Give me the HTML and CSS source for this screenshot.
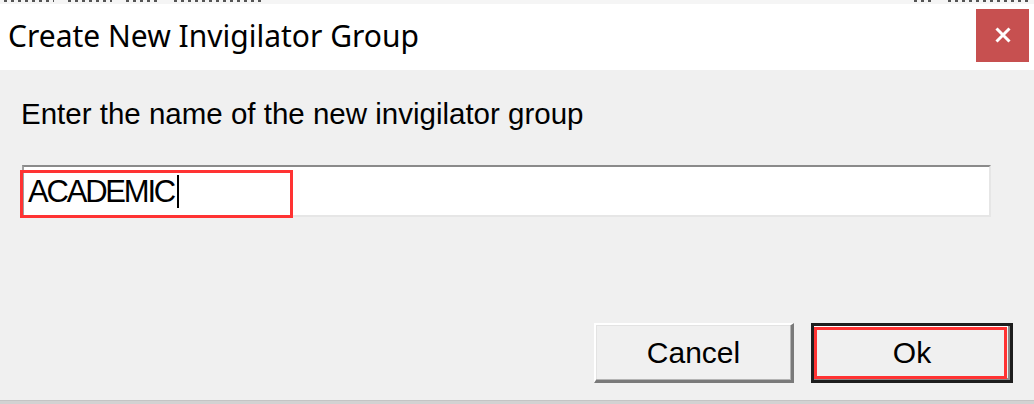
FILE: index.html
```html
<!DOCTYPE html>
<html>
<head>
<meta charset="utf-8">
<title>Create New Invigilator Group</title>
<link rel="stylesheet" href="styles.css">
</head>
<body>
<div class="dialog">
  <div class="under">
    <div class="frag-group">
      <i class="frag w50"></i><i class="frag w44"></i><i class="frag w34"></i><i class="frag w90"></i>
    </div>
    <div class="frag-group">
      <i class="frag w20"></i><i class="frag w80"></i>
    </div>
  </div>
  <div class="titlebar">
    <span class="title">Create New Invigilator Group</span>
    <button class="close" aria-label="Close">
      <svg width="16" height="16" viewBox="0 0 16 16"><path d="M1.5 1.5 L14.5 14.5 M14.5 1.5 L1.5 14.5" stroke="#fff" stroke-width="3" fill="none"/></svg>
    </button>
  </div>
  <div class="content">
    <div class="label">Enter the name of the new invigilator group</div>
    <div class="field">
      <span class="value">ACADEMIC</span><span class="caret"></span>
      <span class="mark mark-field"></span>
    </div>
    <div class="buttons">
      <button class="btn">Cancel</button>
      <button class="btn default">Ok<span class="mark mark-ok"></span></button>
    </div>
  </div>
  <div class="bottom-edge"></div>
</div>
</body>
</html>
```
FILE: styles.css
```css
html, body {
  margin: 0;
  padding: 0;
}
body {
  width: 1034px;
  height: 404px;
  overflow: hidden;
  background: #f0f0f0;
  font-family: "Liberation Sans", Arial, sans-serif;
}
.dialog {
  display: flex;
  flex-direction: column;
  height: 404px;
}
.under {
  height: 4px;
  overflow: hidden;
  background: #f5f5f5;
  display: flex;
  justify-content: space-between;
  padding: 0 6px 0 4px;
}
.frag-group {
  display: flex;
  gap: 14px;
}
.frag {
  display: block;
  height: 2px;
  background: repeating-linear-gradient(90deg, #555 0 3px, transparent 3px 7px);
}
.w20 { width: 20px; }
.w34 { width: 34px; }
.w44 { width: 44px; }
.w50 { width: 50px; }
.w80 { width: 80px; }
.w90 { width: 90px; }
.titlebar {
  height: 66px;
  background: #ffffff;
  display: flex;
  align-items: center;
  justify-content: space-between;
  padding: 0 5px 0 8px;
}
.title {
  font-family: "Noto Sans", "Open Sans", sans-serif;
  font-size: 30px;
  color: #000;
  margin-top: -3px;
}
.close {
  width: 53px;
  height: 53px;
  margin-top: -4px;
  background: #c75050;
  border: none;
  padding: 0;
  display: flex;
  align-items: center;
  justify-content: center;
}
.content {
  flex: 1;
  display: flex;
  flex-direction: column;
  padding: 27px 21px 0 22px;
}
.label {
  font-size: 29.5px;
  line-height: 34px;
  color: #000;
  margin-left: -1px;
}
.field {
  position: relative;
  margin-top: 34px;
  margin-right: 22px;
  height: 48px;
  background: #fff;
  border-top: 2px solid #8a8a8a;
  border-left: 2px solid #a0a0a0;
  border-right: 2px solid #e6e6e6;
  border-bottom: 2px solid #e6e6e6;
  display: flex;
  align-items: center;
  padding-left: 4px;
}
.value {
  font-size: 31px;
  letter-spacing: -2.2px;
  line-height: 36px;
  color: #000;
  margin-top: 2px;
}
.caret {
  display: inline-block;
  width: 2px;
  height: 33px;
  background: #000;
  margin-left: 3px;
}
.mark {
  position: absolute;
  border: 3px solid #ff3333;
  box-sizing: border-box;
  pointer-events: none;
}
.mark-field {
  left: -4px;
  top: 3px;
  width: 273px;
  height: 48px;
}
.buttons {
  margin-top: 106px;
  display: flex;
  justify-content: flex-end;
  gap: 17px;
}
.btn {
  position: relative;
  width: 200px;
  height: 60px;
  box-sizing: border-box;
  background: #f0f0f0;
  font-family: "Liberation Sans", Arial, sans-serif;
  font-size: 30px;
  color: #000;
  border-top: 2px solid #ffffff;
  border-left: 2px solid #ffffff;
  border-right: 3px solid #7a7a7a;
  border-bottom: 3px solid #7a7a7a;
  box-shadow: inset -1px -1px 0 #b4b4b4, inset 1px 1px 0 #e3e3e3;
  padding: 0;
}
.btn.default {
  width: 202px;
  border: 3px solid #1e1e1e;
  box-shadow: inset -2px -2px 0 #8a8a8a, inset 2px 2px 0 #ffffff;
}
.mark-ok {
  left: 0px;
  top: 1px;
  width: 193px;
  height: 52px;
}
.bottom-edge {
  height: 4px;
  background: #d2d2d2;
  border-top: 1px solid #c4c4c4;
  box-sizing: border-box;
}
```
